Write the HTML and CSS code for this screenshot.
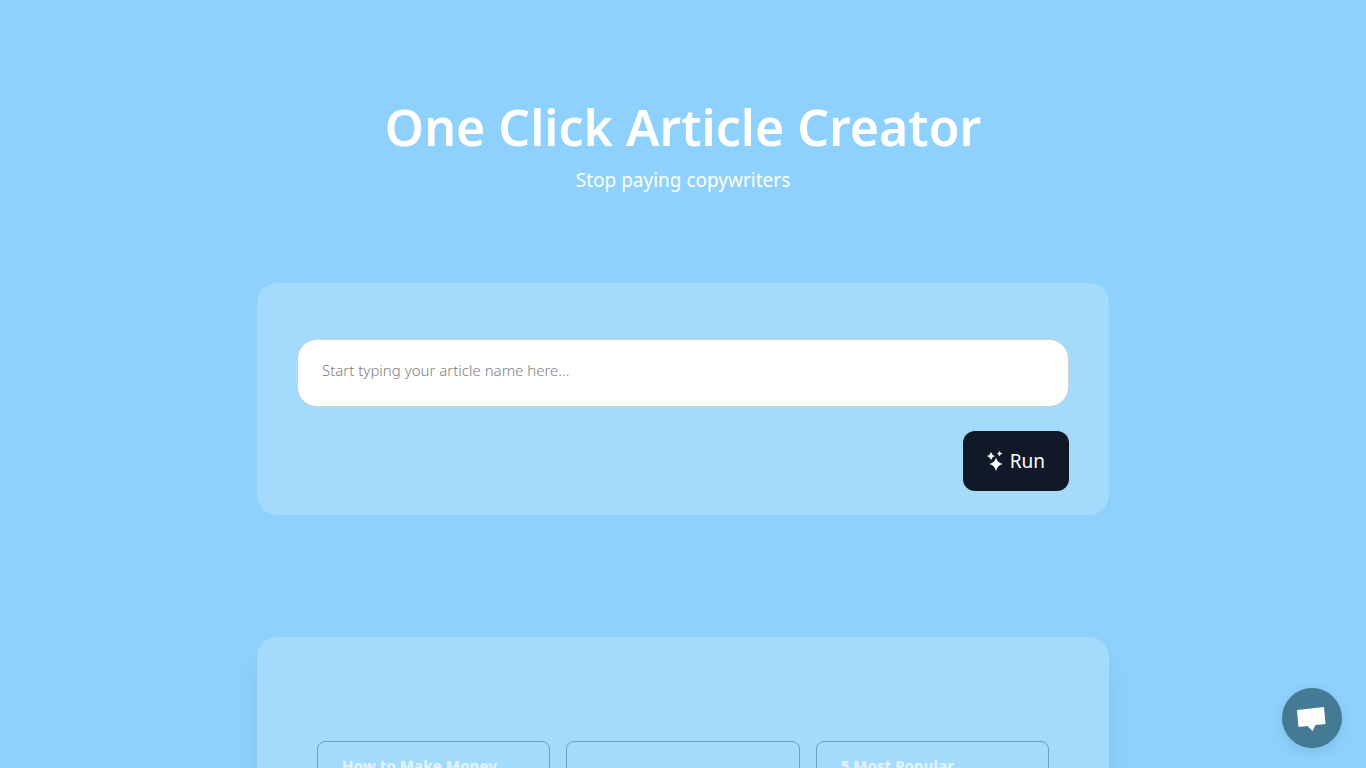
FILE: index.html
```html
<!DOCTYPE html>
<html lang="en">
<head>
<meta charset="utf-8">
<meta name="viewport" content="width=device-width, initial-scale=1">
<title>One Click Article Creator</title>
<link rel="stylesheet" href="styles.css">
</head>
<body>
<main class="page">
  <header class="hero">
    <h1 class="hero-title">One Click Article Creator</h1>
    <p class="hero-subtitle">Stop paying copywriters</p>
  </header>
  <form class="panel creator">
    <input class="article-name" type="text" aria-label="Article name" placeholder="Start typing your article name here...">
    <button class="run" type="button">
      <svg class="run-icon" viewBox="0 0 16 20" aria-hidden="true">
        <path d="M9 6.500Q10.300 11.700 15.500 13Q10.300 14.300 9 20Q7.700 14.300 2.500 13Q7.700 11.700 9 6.500Z"/>
        <path d="M4 1Q4.800 4.200 8 5Q4.800 5.800 4 9Q3.200 5.800 0 5Q3.200 4.200 4 1Z"/>
        <path d="M12.500 0Q13 2 15.500 2.500Q13 3 12.500 5.500Q12 3 10 2.500Q12 2 12.500 0Z"/>
      </svg>
      <span>Run</span>
    </button>
  </form>
  <section class="panel articles" aria-label="Articles">
    <article class="card"><h2 class="card-title">How to Make Money</h2></article>
    <article class="card"></article>
    <article class="card"><h2 class="card-title">5 Most Popular</h2></article>
  </section>
</main>
<button class="chat" type="button" aria-label="Open chat">
  <svg class="chat-icon" viewBox="0 0 30 26" aria-hidden="true">
    <path d="M0 5 27 2 28.500 19 18.500 20 15.500 26 10.500 21 1.500 22Z"/>
  </svg>
</button>
</body>
</html>
```
FILE: styles.css
```css
* { box-sizing: border-box; }

html { scrollbar-width: none; }

body {
  margin: 0;
  background: #8ed1fc;
  color: #fff;
  font-family: "Segoe UI", "Noto Sans", "Open Sans", sans-serif;
}

.page {
  max-width: 900px;
  margin: 0 auto;
  padding: 95px 24px 48px;
}

.hero {
  text-align: center;
  margin-bottom: 89px;
}

.hero-title {
  margin: 0;
  font-size: 50px;
  font-weight: 600;
  line-height: 64px;
}

.hero-subtitle {
  margin: 7px 0 0;
  font-size: 19px;
  line-height: 28px;
}

.panel {
  background: rgba(255, 255, 255, 0.2);
  border-radius: 20px;
}

.creator {
  display: flex;
  flex-direction: column;
  align-items: flex-end;
  gap: 24px;
  padding: 56px 40px 24px;
  margin-bottom: 122px;
}

.article-name {
  width: 100%;
  height: 68px;
  padding: 0 24px 6px;
  border: 1px solid #d1d1d1;
  border-radius: 20px;
  background: #fff;
  color: #111827;
  font-family: inherit;
  font-size: 15px;
  font-weight: 300;
}

.article-name::placeholder {
  color: #808080;
  opacity: 1;
}

.run {
  display: flex;
  align-items: center;
  justify-content: center;
  gap: 7px;
  height: 60px;
  padding: 0 24px;
  border: 0;
  border-radius: 12px;
  background: #111827;
  color: #fff;
  font-family: inherit;
  font-size: 19px;
}

.run-icon {
  width: 16px;
  height: 20px;
  fill: #fff;
}

.articles {
  display: grid;
  grid-template-columns: repeat(3, 1fr);
  gap: 16px;
  padding: 104px 60px 60px;
  box-shadow: 0 20px 25px -5px rgba(31, 78, 160, 0.15);
}

.card {
  min-height: 120px;
  padding: 11px 24px;
  border: 1px solid #719db9;
  border-radius: 8px;
}

.card-title {
  margin: 0;
  color: rgba(255, 255, 255, 0.7);
  font-size: 15px;
  font-weight: 800;
  line-height: 26px;
}

.chat {
  position: fixed;
  right: 24px;
  bottom: 20px;
  display: grid;
  place-items: center;
  width: 60px;
  height: 60px;
  padding: 0;
  border: 0;
  border-radius: 50%;
  background: #457a94;
  box-shadow: 0 4px 12px rgba(69, 122, 148, 0.2);
}

.chat-icon {
  width: 30px;
  height: 26px;
  fill: #fff;
}
```
